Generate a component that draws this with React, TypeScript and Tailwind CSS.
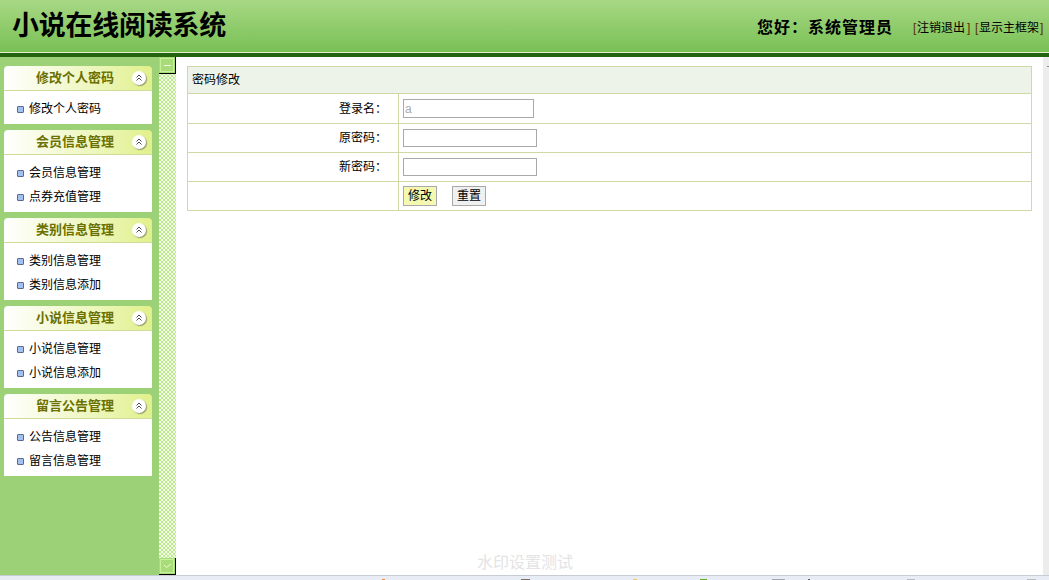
const font = "font-['Liberation_Sans','Noto_Sans_CJK_SC',sans-serif]";

const menu = [
  { title: '修改个人密码', items: ['修改个人密码'] },
  { title: '会员信息管理', items: ['会员信息管理', '点券充值管理'] },
  { title: '类别信息管理', items: ['类别信息管理', '类别信息添加'] },
  { title: '小说信息管理', items: ['小说信息管理', '小说信息添加'] },
  { title: '留言公告管理', items: ['公告信息管理', '留言信息管理'] },
];

function CollapseIcon() {
  return (
    <span className="flex h-[14px] w-[14px] items-center justify-center rounded-full bg-white shadow-[1px_1px_1px_#8f9a70]">
      <svg width="8" height="8" viewBox="0 0 8 8" fill="none" stroke="#4a4a4a" strokeWidth="1">
        <path d="M1.5 3.5 4 1l2.5 2.5M1.5 6.5 4 4l2.5 2.5" />
      </svg>
    </span>
  );
}

function MenuGroup({ title, items }: { title: string; items: string[] }) {
  return (
    <div className="mb-[6px] w-[148px]">
      <div className="relative flex h-[25px] items-center justify-center rounded-t-[4px] border-b border-[#cfdc9a] bg-gradient-to-r from-white to-[#e2f08c] pr-[6px] text-[13px] font-bold text-[#6b7000]">
        {title}
        <span className="absolute right-[6px] top-[5px]">
          <CollapseIcon />
        </span>
      </div>
      <div className="bg-white pb-[3px] pt-[6px]">
        {items.map((item) => (
          <div key={item} className="flex h-[24px] items-center pl-[13px] text-[12px] text-black">
            <span className="mr-[5px] h-[7px] w-[7px] rounded-[1px] border border-[#5a6a90] bg-[#a4c0f0]" />
            {item}
          </div>
        ))}
      </div>
    </div>
  );
}

function FormRow({ label, tall, children }: { label?: string; tall?: boolean; children: React.ReactNode }) {
  return (
    <div className={`flex border-b border-[#d0d8a8] ${tall ? 'h-[30px]' : 'h-[29px]'}`}>
      <div className="flex w-[211px] items-center justify-end border-r border-[#d0d8a8] pr-[11px]">{label}</div>
      <div className="flex items-center pl-[4px]">{children}</div>
    </div>
  );
}

function SplitButton({ children }: { children: React.ReactNode }) {
  return (
    <div className="h-[17px] border-b border-r border-black bg-[#a8dc78] p-px">
      <div className="flex h-full items-center justify-center border border-[#c8f09c]">{children}</div>
    </div>
  );
}

export default function App() {
  return (
    <div className={`flex h-[580px] w-[1049px] flex-col overflow-hidden bg-white text-[12px] text-black ${font}`}>
      <header className="flex h-[52px] items-center justify-between bg-gradient-to-b from-[#a8d884] to-[#78c054] pl-[12px] pr-[5px]">
        <h1 className="text-[27px] font-bold leading-none tracking-[-0.25px] text-black">小说在线阅读系统</h1>
        <div className="flex items-center pt-[3px]">
          <span className="mr-[20px] text-[16px] font-bold tracking-[1px]">您好：系统管理员</span>
          <span className="flex items-center text-[12px]">
            <span className="w-[4px] text-[#5a3000]">[</span>
            注销退出
            <span className="ml-[2px] w-[4px] text-[#5a3000]">]</span>
            <span className="ml-[4px] w-[4px] text-[#5a3000]">[</span>
            显示主框架
            <span className="ml-px w-[4px] text-[#5a3000]">]</span>
          </span>
        </div>
      </header>
      <div className="h-[5px] border-t border-[#e4f2d0] bg-[#24640e]" />

      <div className="flex h-[518px]">
        <aside className="w-[159px] bg-[#9dd178] pl-[4px] pt-[9px]">
          {menu.map((group) => (
            <MenuGroup key={group.title} title={group.title} items={group.items} />
          ))}
        </aside>

        <div className="flex w-[17px] flex-col justify-between bg-[repeating-conic-gradient(#bce88f_0_25%,#f4fce8_0_50%)] bg-[length:4px_4px]">
          <SplitButton>
            <span className="h-px w-[7px] bg-[#f0fce0]" />
          </SplitButton>
          <SplitButton>
            <svg width="9" height="6" viewBox="0 0 9 6" fill="none" stroke="#eefadc" strokeWidth="1">
              <path d="M1 2 3.5 4.5 8 1" />
            </svg>
          </SplitButton>
        </div>

        <main className="relative w-[867px] pl-[11px] pr-[11px] pt-[9px]">
          <div className="border border-b-0 border-[#d0d8a8]">
            <div className="flex h-[27px] items-center border-b border-[#d0d8a8] bg-[#edf3e8] pl-[4px]">密码修改</div>
            <FormRow label="登录名：" tall>
              <input readOnly value="a" className="h-[19px] w-[131px] border border-[#a9a9a9] px-[1px] text-[12px] text-[#a9a9a9]" />
            </FormRow>
            <FormRow label="原密码：">
              <input className="h-[18px] w-[134px] border border-[#a9a9a9]" />
            </FormRow>
            <FormRow label="新密码：">
              <input className="h-[18px] w-[134px] border border-[#a9a9a9]" />
            </FormRow>
            <FormRow>
              <button className="mb-px mr-[15px] h-[20px] w-[34px] border border-[#a9a9a9] bg-[#f4f8b0] text-[12px]">修改</button>
              <button className="mb-px h-[20px] w-[34px] border border-[#a9a9a9] bg-[#f0f0f0] text-[12px]">重置</button>
            </FormRow>
          </div>
          <div className="absolute bottom-px left-[301px] text-[16px] leading-[22px] text-[#e4e4e4]">水印设置测试</div>
        </main>

        <div className="relative w-[6px] bg-[#ececec]">
          <span className="absolute right-0 top-[9px] h-px w-[2px] bg-[#8a8a8a]" />
        </div>
      </div>

      <div className="relative h-[5px] border-t border-[#c8ccd4] bg-[#e8ecf4]">
        <span className="absolute bottom-0 left-[382px] h-px w-[3px] bg-[#e88a3c]" />
        <span className="absolute bottom-0 left-[521px] h-px w-[9px] bg-[#7a7068]" />
        <span className="absolute bottom-0 left-[633px] h-px w-[4px] bg-[#e8c860]" />
        <span className="absolute bottom-0 left-[700px] h-px w-[7px] bg-[#6aa820]" />
        <span className="absolute bottom-0 left-[772px] h-px w-[13px] bg-[#a0a8b0]" />
        <span className="absolute bottom-0 left-[808px] h-px w-[2px] bg-[#606060]" />
        <span className="absolute bottom-0 left-[907px] h-px w-[8px] bg-[#b8bcc0]" />
        <span className="absolute bottom-0 left-[1027px] h-px w-[9px] bg-[#b8bcc0]" />
      </div>
    </div>
  );
}
